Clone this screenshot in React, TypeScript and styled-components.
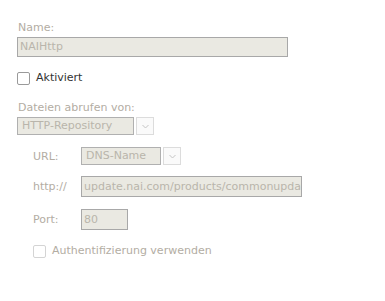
import React from 'react';
import styled, { createGlobalStyle } from 'styled-components';

const GlobalStyle = createGlobalStyle`
  html, body {
    margin: 0;
    padding: 0;
    background: #ffffff;
  }
  body {
    font-family: "DejaVu Sans", Verdana, sans-serif;
    font-size: 11px;
  }
`;

const Form = styled.div`
  width: 385px;
  height: 301px;
  box-sizing: border-box;
  padding: 21px 0 0 17px;
  display: flex;
  flex-direction: column;
`;

const Label = styled.div`
  color: #b3ada3;
  line-height: 14px;
  padding-left: 1px;
  margin-bottom: 2px;
`;

const TextInput = styled.div<{ $width: number; $height?: number }>`
  width: ${(p) => p.$width}px;
  height: ${(p) => p.$height ?? 20}px;
  box-sizing: border-box;
  border: 1px solid #a8a8a8;
  background: #eae9e2;
  color: #b9b5ab;
  line-height: ${(p) => (p.$height ?? 20) - 2}px;
  padding-left: 2px;
  white-space: nowrap;
  overflow: hidden;
`;

const CheckRow = styled.label<{ $disabled?: boolean }>`
  display: flex;
  align-items: center;
  gap: 6px;
  color: ${(p) => (p.$disabled ? '#b3ada3' : '#333333')};
  line-height: 14px;
`;

const Box = styled.span<{ $disabled?: boolean }>`
  width: 13px;
  height: 13px;
  box-sizing: border-box;
  border: 1px solid ${(p) => (p.$disabled ? '#d4d4d4' : '#9a9a9a')};
  border-radius: 2px;
  background: #ffffff;
`;

const SelectWrap = styled.div`
  display: flex;
  gap: 2px;
`;

const SelectValue = styled.div<{ $width: number }>`
  width: ${(p) => p.$width}px;
  height: 18px;
  box-sizing: border-box;
  border: 1px solid #b0b0b0;
  background: #eae9e2;
  color: #b9b5ab;
  line-height: 16px;
  padding-left: 4px;
`;

const SelectArrow = styled.div`
  width: 18px;
  height: 18px;
  box-sizing: border-box;
  border: 1px solid #dcdcdc;
  background: #fafafa;
  display: flex;
  align-items: center;
  justify-content: center;
`;

const Indented = styled.div`
  display: grid;
  grid-template-columns: 48px auto;
  align-items: center;
  row-gap: 11px;
  padding-left: 16px;
  margin-top: 12px;
`;

const RowLabel = styled.div<{ $offset?: number }>`
  color: #b3ada3;
  margin-top: ${(p) => p.$offset ?? 0}px;
`;

const Spacer = styled.div<{ $h: number }>`
  height: ${(p) => p.$h}px;
`;

const SubRow = styled.div`
  padding-left: 16px;
`;

const Chevron = () => (
  <svg width="7" height="5" viewBox="0 0 7 5">
    <path d="M0.5 1 L3.5 4 L6.5 1" fill="none" stroke="#c4c4c4" strokeWidth="1" />
  </svg>
);

const Select = ({ value, width }: { value: string; width: number }) => (
  <SelectWrap>
    <SelectValue $width={width}>{value}</SelectValue>
    <SelectArrow>
      <Chevron />
    </SelectArrow>
  </SelectWrap>
);

const App = () => {
  return (
    <>
      <GlobalStyle />
      <Form>
        <Label>Name:</Label>
        <TextInput $width={271}>NAIHttp</TextInput>
        <Spacer $h={14} />
        <CheckRow>
          <Box />
          Aktiviert
        </CheckRow>
        <Spacer $h={16} />
        <Label>Dateien abrufen von:</Label>
        <Select value="HTTP-Repository" width={117} />
        <Indented>
          <RowLabel>URL:</RowLabel>
          <Select value="DNS-Name" width={80} />
          <RowLabel>http://</RowLabel>
          <TextInput $width={221} $height={21}>
            update.nai.com/products/commonupdater
          </TextInput>
          <RowLabel $offset={1}>Port:</RowLabel>
          <TextInput $width={47} $height={21} style={{ marginTop: 1 }}>
            80
          </TextInput>
        </Indented>
        <Spacer $h={14} />
        <SubRow>
          <CheckRow $disabled>
            <Box $disabled />
            Authentifizierung verwenden
          </CheckRow>
        </SubRow>
      </Form>
    </>
  );
};

export default App;
